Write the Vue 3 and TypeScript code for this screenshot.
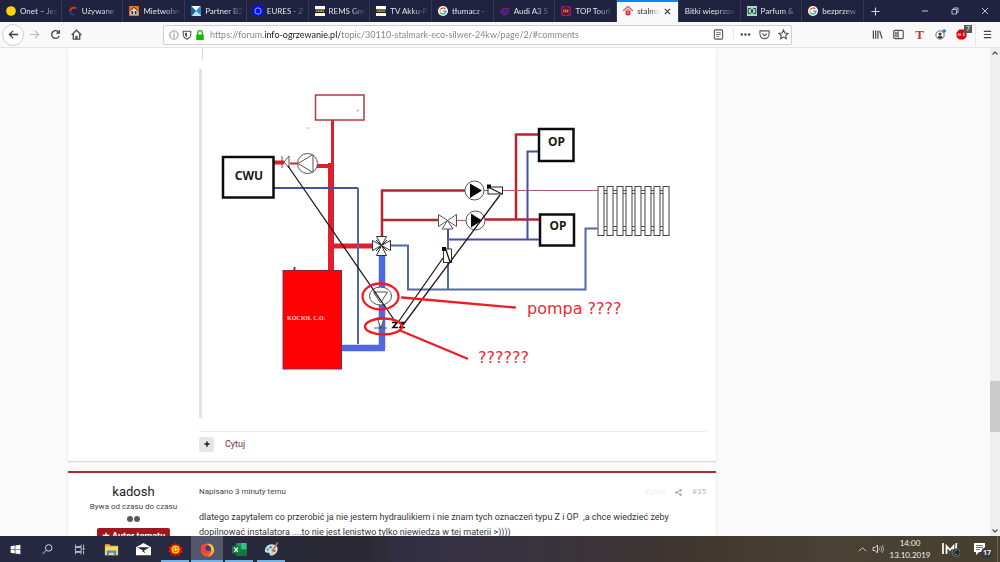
<script setup lang="ts">
import { ref } from 'vue'

interface Tab {
  title: string
  icon: string
  active?: boolean
}

const tabs: Tab[] = [
  { title: 'Onet – Jes', icon: 'onet' },
  { title: 'Używane', icon: 'used' },
  { title: 'Mietwohn', icon: 'house' },
  { title: 'Partner B2', icon: 'partner' },
  { title: 'EURES - Z', icon: 'eures' },
  { title: 'REMS Gm', icon: 'rems' },
  { title: 'TV Akku-P', icon: 'rems' },
  { title: 'tłumacz -', icon: 'google' },
  { title: 'Audi A3 S', icon: 'audi' },
  { title: 'TOP Touri', icon: 'top' },
  { title: 'stalma', icon: 'flame', active: true },
  { title: 'Bitki wieprzov', icon: '' },
  { title: 'Parfum &', icon: 'parfum' },
  { title: 'bezprzew', icon: 'google' },
]

const address = ref('https://forum.info-ogrzewanie.pl/topic/30110-stalmark-eco-silwer-24kw/page/2/#comments')

const apps = [
  { name: 'Start', icon: 'start' },
  { name: 'Szukaj', icon: 'search' },
  { name: 'Widok zadań', icon: 'tasks' },
  { name: 'Eksplorator plików', icon: 'folder' },
  { name: 'Poczta', icon: 'mail' },
  { name: 'Gadu-Gadu', icon: 'sun', running: true },
  { name: 'Firefox', icon: 'firefox', running: true, focused: true },
  { name: 'Excel', icon: 'excel', running: true },
  { name: 'Paint', icon: 'paint', running: true },
]

const fins = Array.from({ length: 8 }, (_, i) => 598 + Math.round(i * 9.3))
</script>

<template>
  <div class="screen">
    <svg class="defs" aria-hidden="true">
      <symbol id="i-onet" viewBox="0 0 12 12"><circle cx="6" cy="6" r="5.8" fill="#ffd500" /></symbol>
      <symbol id="i-used" viewBox="0 0 12 12">
        <path d="M10 2.6C6 1 2.4 3 2.6 6.6" fill="none" stroke="#d8352a" stroke-width="2.4" />
        <path d="M2.6 6.4C2.8 9.4 5 10.8 8 10.6" fill="none" stroke="#22407c" stroke-width="2.4" />
      </symbol>
      <symbol id="i-house" viewBox="0 0 12 12">
        <rect width="12" height="12" rx="1" fill="#e8731f" />
        <path d="M1.5 6L6 2l4.5 4v4.5h-9z" fill="#d9dde2" /><path d="M3 6h2v4H3zM7 6h2v4H7z" fill="#28303c" /><path d="M1 6L6 1.6 11 6" fill="none" stroke="#3a2a20" />
      </symbol>
      <symbol id="i-partner" viewBox="0 0 12 12">
        <rect width="12" height="12" fill="#1e8ed0" /><path d="M0 0h11L6 6z" fill="#fff" /><path d="M0 0l6 6-6 6z" fill="#15659d" /><path d="M6 6l6 5v1H1z" fill="#bfe4f8" />
      </symbol>
      <symbol id="i-eures" viewBox="0 0 12 12">
        <rect width="12" height="12" fill="#0710e8" /><circle cx="6" cy="6" r="3.8" fill="none" stroke="#9cb2ff" stroke-width="1.1" />
      </symbol>
      <symbol id="i-rems" viewBox="0 0 12 12">
        <rect width="12" height="12" fill="#fff" /><path d="M0 4h12v4.5H0z" fill="#25231a" /><path d="M1 6.2h10" stroke="#dfce55" stroke-width="1.4" stroke-dasharray="2 .6" />
      </symbol>
      <symbol id="i-google" viewBox="0 0 12 12">
        <circle cx="6" cy="6" r="6" fill="#fff" />
        <path d="M8.7 3.6A3.7 3.7 0 0 0 2.8 4.2" fill="none" stroke="#ea4335" stroke-width="1.5" />
        <path d="M2.8 4.2a3.7 3.7 0 0 0 0 3.6" fill="none" stroke="#fbbc05" stroke-width="1.5" />
        <path d="M2.8 7.8a3.7 3.7 0 0 0 5.6.9" fill="none" stroke="#34a853" stroke-width="1.5" />
        <path d="M8.4 8.7A3.6 3.6 0 0 0 9.7 6H6.2" fill="none" stroke="#4285f4" stroke-width="1.5" />
      </symbol>
      <symbol id="i-audi" viewBox="0 0 12 12">
        <ellipse cx="5.8" cy="6.4" rx="4.8" ry="3.6" fill="#2229a8" /><path d="M1 8.5C0 4 6 1 11.5 3.5M3 10c4 1 7-1 7.500-4" fill="none" stroke="#b3202e" stroke-width="1.2" />
      </symbol>
      <symbol id="i-top" viewBox="0 0 12 12">
        <rect width="12" height="12" rx="2" fill="#8f1d78" /><circle cx="6" cy="6" r="4.800" fill="#5b102f" /><path d="M2.500 5h7M2.500 7h7" stroke="#ffb52e" stroke-width="1.2" stroke-dasharray="1.800 .5" />
      </symbol>
      <symbol id="i-flame" viewBox="0 0 12 12">
        <path d="M0 6l6-5.500L12 6" fill="none" stroke="#d9646a" stroke-width="1.600" /><path d="M2.500 6.500L6 3.500l3.500 3" fill="none" stroke="#d9646a" stroke-width="1.200" /><circle cx="6" cy="8.500" r="3" fill="#d8303a" /><circle cx="6" cy="8" r="1" fill="#f6b0a8" />
      </symbol>
      <symbol id="i-parfum" viewBox="0 0 12 12">
        <rect width="12" height="12" fill="#a9d8cb" /><path d="M1.500 3h2.500c2 0 2 6 0 6H1.500zM10.500 3H8C6 3 6 9 8 9h2.500z" fill="none" stroke="#244a43" stroke-width="1.200" />
      </symbol>

      <symbol id="i-start" viewBox="0 0 16 16"><path d="M2 4l5-.8v4.400H2zM7.800 3.100L14 2.200v5.400H7.800zM2 8.400h5v4.400L2 12zM7.800 8.400H14v5.400l-6.200-.9z" fill="#fff" /></symbol>
      <symbol id="i-search" viewBox="0 0 16 16"><circle cx="9.500" cy="6" r="4" fill="none" stroke="#d8d8e0" stroke-width="1.200" /><path d="M6.500 9L2 13.500" stroke="#d8d8e0" stroke-width="1.200" /></symbol>
      <symbol id="i-tasks" viewBox="0 0 16 16"><path d="M3 2v2.500h7V2M3 14v-2.500h7V14M3 5.500h7v5H3zM13 2v4M13 9.500V14" fill="none" stroke="#d0d0da" stroke-width="1.100" /><rect x="12" y="6.500" width="2" height="2" fill="#e8e8ee" /></symbol>
      <symbol id="i-folder" viewBox="0 0 16 16"><path d="M1 2.500h5l1 1.500h8v10H1z" fill="#e9b33a" /><path d="M1 5h14v9H1z" fill="#ffd666" /><path d="M3 14V9h10v5h-2.500v-2.500h-5V14z" fill="#3a94da" /></symbol>
      <symbol id="i-mail" viewBox="0 0 16 16"><path d="M0 5.500L8 1l8 4.500V14H0z" fill="#fff" /><path d="M1.500 5.500h13L8 9.500z" fill="#292b42" /><path d="M8 9l2.500 3-4-2z" fill="#292b42" /></symbol>
      <symbol id="i-sun" viewBox="0 0 16 16"><path d="M8 .5l1.600 2.900L12.500 2l.3 3.100 3 .9-1.500 2.500L16 11l-3.200.600-.5 3-2.700-1.200L8 15.500l-1.800-2.300-2.900 1.200-.4-3L0 10.500l1.600-2.300L.4 5.500l3-.6L3.600 2l2.700 1.300z" fill="#f30e08" /><circle cx="8" cy="8" r="4.300" fill="#ffd21c" /><path d="M5.500 8.700c.9 2 4 2 5 0" fill="none" stroke="#8c3c00" /><circle cx="6.500" cy="6.600" r=".7" fill="#4a2500" /><circle cx="9.600" cy="6.600" r=".7" fill="#4a2500" /></symbol>
      <symbol id="i-firefox" viewBox="0 0 16 16"><circle cx="8" cy="8.500" r="7" fill="#ff5a2a" /><path d="M8 1.500c4.500 0 7.500 3.500 7 7.500-.5 3.500-3.500 6.500-7 6.500 4-2 5-5 4-8-.6-2.500-2.500-3.500-4-6z" fill="#ffc629" /><circle cx="7.800" cy="7.500" r="3.800" fill="#29469b" /><path d="M1 6c0-2 1-3.500 1.500-4 .5 1.500 1.500 2.500 4 3L5.500 7c1 2.500 3 3 5.500 2-.5 3-3.500 4.500-6 3.500C2.500 11.500 1 9 1 6z" fill="#f5452c" /></symbol>
      <symbol id="i-excel" viewBox="0 0 16 16"><rect x="4.500" y="1" width="11" height="14" rx="1" fill="#1f9c5c" /><path d="M10 1h5.500v7H10z" fill="#33c481" /><path d="M4.500 8h11v7h-11z" fill="#137644" /><rect y="4" width="9" height="8.500" rx=".8" fill="#107c41" /><path d="M2.500 6l4 4.500M6.500 6l-4 4.500" stroke="#fff" stroke-width="1.300" /></symbol>
      <symbol id="i-paint" viewBox="0 0 16 16"><path d="M8 2.500c5 0 7 3 6.500 6S11 14.500 7.500 14.500c-2 0-1-2.500-2.500-3S1 12 1 9s3-6.500 7-6.500z" fill="#c9e2f0" /><circle cx="4" cy="8" r="1.300" fill="#4caf50" /><circle cx="7" cy="5.500" r="1.300" fill="#3b7fd0" /><circle cx="11" cy="9.500" r="1.400" fill="#e14f45" /><circle cx="8.500" cy="12" r="1.200" fill="#f0bc35" /><path d="M14.500.5L8.500 10" stroke="#bd7a35" stroke-width="1.700" /></symbol>
    </svg>

    <header class="tabbar">
      <div class="tabs" role="tablist">
        <button v-for="(tab, i) in tabs" :key="i" class="tab" :class="{ active: tab.active }" role="tab" :aria-selected="!!tab.active">
          <svg v-if="tab.icon" class="favicon"><use :href="'#i-' + tab.icon" /></svg>
          <span class="tab-title">{{ tab.title }}</span>
          <svg v-if="tab.active" class="tab-close" viewBox="0 0 8 8"><path d="M1 1l6 6M7 1L1 7" stroke="#333" stroke-width="1.200" /></svg>
        </button>
      </div>
      <button class="new-tab" aria-label="Nowa karta"><svg viewBox="0 0 10 10"><path d="M5 .5v9M.5 5h9" stroke="#d8d8e2" stroke-width="1.200" /></svg></button>
      <div class="window-buttons">
        <button aria-label="Minimalizuj"><svg viewBox="0 0 8 8"><path d="M1 4h6" stroke="#c4c4d0" /></svg></button>
        <button aria-label="Przywróć"><svg viewBox="0 0 8 8"><path d="M1 2.500h4.500V7H1zM2.500 2.500V1H7v4.500H5.500" fill="none" stroke="#c4c4d0" stroke-width=".9" /></svg></button>
        <button aria-label="Zamknij"><svg viewBox="0 0 8 8"><path d="M1 1l6 6M7 1L1 7" stroke="#c4c4d0" /></svg></button>
      </div>
    </header>

    <nav class="toolbar">
      <div class="nav-buttons">
        <button class="back" aria-label="Wstecz"><svg viewBox="0 0 12 12"><path d="M11 6H1.500M5.500 2l-4 4 4 4" fill="none" stroke="#3c3c40" stroke-width="1.400" /></svg></button>
        <button aria-label="Dalej"><svg viewBox="0 0 12 12"><path d="M1 6h9.500M6.500 2l4 4-4 4" fill="none" stroke="#b8b8ba" stroke-width="1.300" /></svg></button>
        <button aria-label="Odśwież"><svg viewBox="0 0 12 12"><path d="M10 7.500A4.200 4.200 0 1 1 9 3" fill="none" stroke="#4a4a4e" stroke-width="1.500" /><path d="M11 .5v4.800H6.200z" fill="#4a4a4e" /></svg></button>
        <button aria-label="Strona startowa"><svg viewBox="0 0 12 12"><path d="M.8 6.500L6 1.300l5.200 5.200M2.500 5.500V11h7V5.500" fill="none" stroke="#4a4a4e" stroke-width="1.400" /><path d="M4.800 7.500h2.400V11H4.800z" fill="#4a4a4e" /></svg></button>
      </div>
      <div class="urlbar">
        <svg class="url-icon" viewBox="0 0 12 12"><circle cx="6" cy="6" r="5" fill="none" stroke="#777" /><path d="M6 5v4M6 2.800v1.200" stroke="#777" stroke-width="1.200" /></svg>
        <svg class="url-icon" viewBox="0 0 12 12"><path d="M1.500 1.500h9v4c0 3-2 4.500-4.500 5.500-2.500-1-4.500-2.500-4.500-5.500z" fill="none" stroke="#555" stroke-width="1.300" /><path d="M6 3.300v5.500C4.500 8 3.500 7 3.500 5.500V3.300z" fill="#555" /></svg>
        <svg class="url-icon" viewBox="0 0 12 12"><path d="M1.500 5.500h9V12h-9z" fill="#12bc00" /><path d="M3.300 6V3.500a2.700 2.700 0 0 1 5.400 0V6" fill="none" stroke="#12bc00" stroke-width="1.600" /></svg>
        <input v-model="address" class="address" type="text" aria-label="Adres" spellcheck="false" />
        <button class="reader" aria-label="Widok czytnika"><svg viewBox="0 0 12 12"><rect x="1.500" y="1" width="9" height="10" rx="1.200" fill="none" stroke="#555" stroke-width="1.200" /><path d="M3.500 4h5M3.500 6h5M3.500 8h3" stroke="#555" stroke-width=".9" /></svg></button>
        <button aria-label="Akcje strony"><svg viewBox="0 0 12 12"><circle cx="2" cy="6" r="1.300" fill="#444" /><circle cx="6" cy="6" r="1.300" fill="#444" /><circle cx="10" cy="6" r="1.300" fill="#444" /></svg></button>
        <button aria-label="Pocket"><svg viewBox="0 0 12 12"><path d="M1 2h10v3.500a5 5 0 0 1-10 0z" fill="none" stroke="#555" stroke-width="1.200" /><path d="M3.500 5L6 7.300 8.500 5" fill="none" stroke="#555" stroke-width="1.300" /></svg></button>
        <button aria-label="Zakładka"><svg viewBox="0 0 12 12"><path d="M6 1l1.500 3.300 3.600.4-2.700 2.400.8 3.600L6 8.900l-3.200 1.800.8-3.600L.9 4.700l3.600-.4z" fill="none" stroke="#444" stroke-width="1.100" /></svg></button>
      </div>
      <div class="tools">
        <button aria-label="Biblioteka"><svg viewBox="0 0 12 12"><path d="M1.500 1.500v9M4 1.500v9M6.500 1.500v9M8.300 2l2.700 8.500" stroke="#444" stroke-width="1.300" /></svg></button>
        <button aria-label="Panel boczny"><svg viewBox="0 0 12 12"><rect x=".8" y="1.500" width="10.400" height="9" rx="1.500" fill="none" stroke="#555" stroke-width="1.300" /><path d="M2.500 3.500h2.500v5H2.500zM6 2v8" fill="#999" stroke="#555" stroke-width=".7" /></svg></button>
        <button class="letter" aria-label="Tłumacz">T</button>
        <button aria-label="Konto"><svg viewBox="0 0 12 12"><circle cx="5.500" cy="6.500" r="4.500" fill="#fff" stroke="#555" /><circle cx="5.500" cy="5.500" r="1.800" fill="#444" /><path d="M2.500 9c1-2 5-2 6 0-1.500 2-4.500 2-6 0z" fill="#444" /><circle cx="10" cy="2.200" r="2" fill="#0a84ff" /></svg></button>
        <button class="blocker" aria-label="Adblock"><svg viewBox="0 0 12 12"><path d="M3.500 .5h5L11.500 4v4.500l-3 3h-5l-3-3V4z" fill="#d8000c" /><path d="M2 7.500l1-3 1 3M5.200 4.500v3M7.500 4.500h2M7.500 6h2M7.500 7.500h2" stroke="#fff" stroke-width=".8" fill="none" /></svg><span class="count">7</span></button>
        <button class="menu" aria-label="Menu"><svg viewBox="0 0 12 12"><path d="M2 2.500h8M2 6h8M2 9.500h8" stroke="#444" stroke-width="1.300" /></svg></button>
      </div>
    </nav>

    <div class="viewport">
      <main class="page">
        <article class="post first">
          <div class="author"></div>
          <div class="body">
            <div class="quote-end"></div>
            <blockquote class="quote">
              <svg class="diagram" viewBox="202 69 504 349" role="img" aria-label="Schemat instalacji C.O.">
                <g fill="none" stroke="#df1f2b">
                  <path d="M332.500 120v46" stroke-width="3" />
                  <path d="M331 163v107" stroke-width="6" />
                  <path d="M328 246h46" stroke-width="5" />
                  <path d="M274 162.500h10M315 166h15" stroke-width="4" />
                  <path d="M290 163.500h7" stroke-width="2" />
                </g>
                <rect x="315.500" y="95" width="48.500" height="25" fill="#fff" stroke="#b33a42" stroke-width="1.500" />
                <circle cx="308" cy="128" r=".7" fill="#888" /><circle cx="357.500" cy="110.500" r=".8" fill="#888" />
                <g fill="none" stroke="#b9252f" stroke-width="2.500">
                  <path d="M382 237v-46.500h83M382 220h57M485 219.500h54M516 219.500v-85h23" />
                  <path d="M456 220.500h10M484 190.500h4M503 190.500h95" stroke="#b05a62" stroke-width="1" />
                </g>
                <g fill="none" stroke="#4650a0" stroke-width="2">
                  <path d="M274 188h84M448 228v11.500h92M527.500 239V151.500h12" />
                  <path d="M358 188v156M391 245.500h17v44h177.500v-61h12M448 239v50" stroke="#5268a8" />
                </g>
                <path d="M382 254v94M341 348h44" fill="none" stroke="#5069e3" stroke-width="6.500" />
                <rect x="283" y="270.500" width="58.500" height="98.500" fill="#fd0203" stroke="#8b2540" />
                <path d="M294.500 267v4" stroke="#b11c2c" stroke-width="2" />
                <text x="287" y="319.500" class="boiler">KOCIOŁ C.O.</text>

                <g fill="#fff" stroke="#0c0c0c" stroke-width="2.500">
                  <rect x="223" y="157" width="50.500" height="40.500" />
                  <rect x="539" y="129" width="34.500" height="32" />
                  <rect x="540" y="214.500" width="34" height="31" />
                </g>
                <text x="249" y="180" class="label">CWU</text>
                <text x="556.500" y="146" class="label">OP</text>
                <text x="558" y="230" class="label">OP</text>

                <g fill="#fff" stroke="#555">
                  <circle cx="307.500" cy="163.500" r="10" />
                  <path d="M298 163.500l15-9v18z" />
                  <path d="M282 156v12" stroke="#a33" /><path d="M289 156v12l-5-6z" />
                  <circle cx="474.500" cy="190.500" r="9.500" /><circle cx="475.500" cy="220.500" r="9.500" />
                  <path d="M447.500 220.500l-9-6v12zM447.500 220.500l9-6v12zM447.500 220.500l-5.500 8.500h11z" />
                  <path d="M381.500 245.500l-5-9h10zM381.500 245.500l-5 10h10zM381.500 245.500l-9-5v10zM381.500 245.500l9-5v10z" stroke="#333" />
                  <path d="M376 240l11 11M387 240l-11 11" stroke="#222" />
                  <ellipse cx="380.500" cy="296" rx="11" ry="9" /><path d="M373.500 292h14l-7 11z" />
                  <path d="M377 318l4 10 3-10zM374 328h13" />
                  <rect x="488" y="187" width="14.500" height="7" stroke="#222" /><rect x="443.500" y="249" width="8" height="13.500" stroke="#333" />
                </g>
                <g fill="#080808">
                  <path d="M470 183.500l12 7-12 7.500zM471 213.500l11 7-11 7z" />
                  <rect x="487" y="184.500" width="4" height="4" /><rect x="442" y="247" width="4" height="4" />
                </g>
                <path d="M392 322.500h5l-4 5h5M399 322.500h5l-4 5h5" fill="none" stroke="#111" stroke-width="1.700" />
                <path d="M288 166l109 158M500 195l-97 130M443 258l-44 63M490 188l12 6M446 250l4 12" fill="none" stroke="#1c1c1c" stroke-width="1.300" />

                <g fill="#fff" stroke="#555">
                  <path v-for="x in fins.slice(0, 7)" :key="'c' + x" :d="`M${x + 6} 190.500h4M${x + 6} 193.500h4M${x + 6} 226.500h4M${x + 6} 230.500h4`" />
                  <rect v-for="x in fins" :key="x" :x="x" y="186.500" width="6" height="49" stroke="#444" />
                </g>

                <g fill="none" stroke="#ee1c24" stroke-width="2.300" stroke-linecap="round">
                  <ellipse cx="380.500" cy="296.500" rx="18" ry="13" /><ellipse cx="383.500" cy="326.500" rx="18.500" ry="8" />
                  <path d="M402 297.500l113 10M400 330.500l67 28" />
                </g>
                <text x="527" y="314" class="note">pompa ????</text>
                <text x="478" y="363" class="note">??????</text>
              </svg>
            </blockquote>
            <footer class="post-footer">
              <button class="multi" aria-label="Cytuj wiele"><svg viewBox="0 0 8 8"><path d="M4 .5v7M.5 4h7" stroke="#222" stroke-width="2" /></svg></button>
              <a href="#cytuj">Cytuj</a>
            </footer>
          </div>
        </article>

        <article class="post second">
          <aside class="author">
            <a class="name" href="#kadosh">kadosh</a>
            <span class="rank">Bywa od czasu do czasu</span>
            <span class="pips"><i></i><i></i></span>
            <strong class="badge">★ Autor tematu</strong>
          </aside>
          <div class="body">
            <div class="meta">
              <a href="#czas">Napisano 3 minuty temu</a>
              <span class="meta-right">
                <a class="report" href="#zglos">Zgłoś</a>
                <a href="#udostepnij" aria-label="Udostępnij"><svg viewBox="0 0 8 8"><path d="M6.500 1.500L1.700 4l4.800 2.500" fill="none" stroke="#aaa" /><circle cx="6.400" cy="1.500" r="1.400" fill="#aaa" /><circle cx="1.600" cy="4" r="1.500" fill="#aaa" /><circle cx="6.400" cy="6.500" r="1.400" fill="#aaa" /></svg></a>
                <a class="number" href="#35">#35</a>
              </span>
            </div>
            <p class="text">dlatego zapytałem co przerobić ja nie jestem hydraulikiem i nie znam tych oznaczeń typu Z i OP &nbsp;,a chce wiedzieć żeby dopilnować instalatora ....to nie jest lenistwo tylko niewiedza w tej materii &gt;))))</p>
          </div>
        </article>
      </main>
      <div class="scrollbar" aria-hidden="true">
        <svg viewBox="0 0 10 10"><path d="M2.500 6.500L5 4l2.500 2.500" fill="none" stroke="#555" stroke-width="1.300" /></svg>
        <div class="track"><div class="thumb"></div></div>
        <svg viewBox="0 0 10 10"><path d="M2.500 3.500L5 6l2.500-2.500" fill="none" stroke="#555" stroke-width="1.300" /></svg>
      </div>
    </div>

    <footer class="taskbar">
      <div class="apps">
        <button v-for="app in apps" :key="app.name" class="app" :class="{ running: app.running, focused: app.focused }" :aria-label="app.name">
          <svg :class="{ thin: ['start', 'search', 'tasks'].includes(app.icon) }"><use :href="'#i-' + app.icon" /></svg>
        </button>
      </div>
      <div class="tray">
        <button aria-label="Ukryte ikony"><svg class="sm" viewBox="0 0 10 10"><path d="M1 7l4-4 4 4" fill="none" stroke="#ddd" /></svg></button>
        <button aria-label="Głośność"><svg class="vol" viewBox="0 0 12 10"><path d="M1 3.500h2L5.500 1v8L3 6.500H1z" fill="none" stroke="#ddd" stroke-width=".9" /><path d="M7 3.500q1 1.500 0 3M8.800 2.300q2 2.700 0 5.400M10.300 1q2.500 4 0 8" fill="none" stroke="#bbb" stroke-width=".8" /></svg></button>
        <time class="clock"><span>14:00</span><span>13.10.2019</span></time>
        <button class="badged" aria-label="Malwarebytes"><svg viewBox="0 0 20 16"><path d="M3 2v11M6.500 13V5l3.500 4 3.500-4v8M16.500 2l-1 10" fill="none" stroke="#fff" stroke-width="1.700" /><circle cx="16" cy="11.500" r="4" fill="#242424" stroke="#888" stroke-width=".7" /><path d="M17 9.500a2.200 2.200 0 1 0 0 4" fill="none" stroke="#799" stroke-width=".9" /></svg></button>
        <button class="badged" aria-label="Powiadomienia"><svg viewBox="0 0 20 16"><path d="M3 2h11v9H8l-3 3v-3H3z" fill="#fff" /><path d="M5 4.500h7M5 6.500h7M5 8.500h4" stroke="#554f45" stroke-width=".8" /></svg><span class="num">17</span></button>
      </div>
    </footer>
  </div>
</template>

<style>
html,
body {
  margin: 0;
  overflow: hidden;
}
</style>

<style scoped>
.screen {
  display: flex;
  flex-direction: column;
  height: 100vh;
  font-family: Roboto, "Liberation Sans", sans-serif;
  background: #fafafa;
}
.defs {
  display: none;
}
button {
  border: 0;
  padding: 0;
  margin: 0;
  background: none;
  font: inherit;
  color: inherit;
  display: flex;
  align-items: center;
  justify-content: center;
}
a {
  color: inherit;
  text-decoration: none;
}
svg {
  display: block;
  flex: none;
}

.tabbar {
  flex: none;
  display: flex;
  height: 22px;
  background: #202340;
  color: #e2e2ec;
  font: 8px Lato, "Open Sans", sans-serif;
}
.tabs {
  display: grid;
  grid-template-columns: repeat(14, 1fr);
  width: 86.4%;
}
.tab {
  justify-content: flex-start;
  gap: 4px;
  padding: 0 2px 0 6px;
  min-width: 0;
  box-sizing: border-box;
  border-right: 1px solid #35385a;
}
.favicon {
  width: 10px;
  height: 10px;
}
.tab-title {
  flex: 1;
  min-width: 0;
  overflow: hidden;
  white-space: nowrap;
  text-align: left;
  mask-image: linear-gradient(90deg, #000 55%, transparent);
}
.tab.active {
  background: #f9f9fa;
  color: #333;
  box-shadow: inset 0 2px #0a84ff;
  padding-right: 7px;
}
.tab-close {
  width: 7px;
  height: 7px;
}
.new-tab {
  width: 22px;
}
.new-tab svg {
  width: 9px;
  height: 9px;
}
.window-buttons {
  flex: 1;
  display: flex;
  justify-content: flex-end;
}
.window-buttons button {
  width: 30px;
}
.window-buttons svg {
  width: 8px;
  height: 8px;
}

.toolbar {
  flex: none;
  display: flex;
  align-items: center;
  height: 26px;
  box-sizing: border-box;
  border-bottom: 1px solid #e4e4e6;
  background: #f9f9fa;
}
.nav-buttons {
  display: flex;
  align-items: center;
  width: 163px;
  box-sizing: border-box;
  padding-left: 2px;
}
.nav-buttons button {
  width: 21px;
}
.nav-buttons button svg {
  width: 11px;
  height: 11px;
}
.nav-buttons .back {
  height: 22px;
  width: 22px;
  box-sizing: border-box;
  border: 1px solid #cfcfd2;
  border-radius: 50%;
  background: #fff;
}
.urlbar {
  flex: 1;
  display: flex;
  align-items: center;
  height: 20px;
  box-sizing: border-box;
  border: 1px solid #d0d0d3;
  border-radius: 2px;
  background: #fff;
  padding: 0 0 0 5px;
  gap: 3px;
}
.url-icon {
  width: 10px;
  height: 10px;
}
.urlbar button {
  width: 16px;
}
.urlbar button svg {
  width: 11px;
  height: 11px;
}
.urlbar .reader {
  width: 22px;
  border-right: 1px solid #e4e4e4;
  padding-right: 8px;
}
.address {
  flex: 1;
  min-width: 0;
  border: 0;
  outline: 0;
  padding: 0;
  margin-left: 2px;
  height: 16px;
  font: 9px Lato, "Open Sans", sans-serif;
  color: transparent;
  background: linear-gradient(90deg, #808084 0 55px, #151518 55px 130px, #808084 130px);
  background-clip: text;
}
.tools {
  display: flex;
  align-items: center;
  justify-content: flex-end;
  width: 208px;
  padding-right: 1px;
  box-sizing: border-box;
}
.tools button {
  width: 21px;
}
.tools svg {
  width: 11px;
  height: 11px;
}
.tools .letter {
  font: bold 13px/14px "Liberation Serif", serif;
  color: #c8372d;
}
.tools .blocker {
  position: relative;
}
.count {
  position: absolute;
  right: 0;
  top: -4px;
  padding: 0 2px;
  font: 7px/8px "Open Sans", sans-serif;
  color: #fff;
  background: #57575c;
}
.tools .menu {
  width: 24px;
  margin-left: 3px;
  border-left: 1px solid #e6e6e8;
  height: 22px;
}

.viewport {
  flex: 1;
  min-height: 0;
  display: flex;
  overflow: hidden;
}
.page {
  flex: 1;
  display: flex;
  flex-direction: column;
  gap: 10px;
  padding-right: 274px;
  padding-left: 68px;
  min-width: 0;
}
.post {
  display: flex;
  background: #fff;
  box-shadow: 0 1px 1px #d9d9d9, 0 0 1px #ccc;
}
.author {
  flex: none;
  width: 131px;
}
.body {
  flex: 1;
  min-width: 0;
  padding-right: 10px;
}
.quote-end {
  height: 12px;
  margin: 0 0 9px 3px;
  border-left: 1px solid #d4d4d4;
}
.quote {
  margin: 0 0 13px;
  border-left: 3px solid #e3e3e3;
}
.diagram {
  width: 100%;
  height: auto;
}
.label {
  font: bold 12px "Noto Sans", "Open Sans", sans-serif;
  text-anchor: middle;
  fill: #1c1c1c;
}
.boiler {
  font: bold 6px "Liberation Serif", serif;
  fill: #ffd9d9;
}
.note {
  font: 16px "DejaVu Sans", sans-serif;
  fill: #ee2a32;
}
.post-footer {
  display: flex;
  align-items: center;
  gap: 11px;
  height: 30px;
  padding-bottom: 5px;
  box-sizing: border-box;
  border-top: 1px solid #ebebeb;
  font-size: 9px;
  color: #6b2f33;
}
.multi {
  width: 15px;
  height: 15px;
  border-radius: 2px;
  background: #e6e6e6;
}
.multi svg {
  width: 6px;
  height: 6px;
}
.second {
  flex: 1;
  border-top: 2px solid #b02a30;
}
.second .author {
  display: flex;
  flex-direction: column;
  align-items: center;
  padding-top: 10px;
  color: #444;
}
.name {
  font-size: 13px;
  line-height: 18px;
  color: #222;
}
.rank {
  font-size: 8px;
  line-height: 12px;
}
.pips {
  display: flex;
  gap: 1px;
  padding: 3px 0 6px;
}
.pips i {
  width: 6px;
  height: 6px;
  border-radius: 50%;
  background: #5a5a5a;
}
.badge {
  flex: none;
  width: 73px;
  text-align: center;
  border-radius: 2px;
  background: #a0181e;
  color: #fff;
  font-size: 9px;
  line-height: 16px;
}
.meta {
  display: flex;
  justify-content: space-between;
  align-items: center;
  margin-top: 13px;
  font-size: 8px;
  line-height: 12px;
  color: #444;
}
.meta-right {
  display: flex;
  align-items: center;
  gap: 10px;
  color: #bbb;
}
.meta-right svg {
  width: 7px;
  height: 7px;
}
.report {
  color: #eee;
}
.text {
  margin: 12px 0 0;
  font-size: 9px;
  line-height: 15px;
  color: #353535;
}

.scrollbar {
  flex: none;
  width: 10px;
  display: flex;
  flex-direction: column;
  background: #efefef;
}
.scrollbar svg {
  width: 10px;
  height: 10px;
}
.track {
  flex: 1;
  display: flex;
  flex-direction: column;
  justify-content: flex-end;
  padding-bottom: 94px;
}
.thumb {
  height: 51px;
  background: #cbcbcb;
}

.taskbar {
  flex: none;
  display: flex;
  justify-content: space-between;
  height: 26px;
  color: #f0f0f0;
  background: linear-gradient(90deg, #272943 0, #282a40 22%, #292833 32%, #2c2a34 37%, #322f45 41%, #37323f 50%, #3a3436 62%, #43382f 72%, #494133 82%, #47402f 100%);
}
.apps {
  display: flex;
}
.app {
  position: relative;
  width: 32px;
}
.app:first-child {
  width: 31px;
}
.app svg {
  width: 15px;
  height: 15px;
}
.app svg.thin {
  width: 13px;
  height: 13px;
}
.app.focused {
  background: #54566b;
}
.app.running::after {
  content: "";
  position: absolute;
  inset: auto 2px 0;
  height: 2px;
  background: #6fb2e6;
}
.app.focused::after {
  inset: auto 0 0;
}
.tray {
  display: flex;
  align-items: center;
  padding-right: 1px;
  border-right: 1px solid #6a6355;
  margin-right: 2px;
}
.sm {
  width: 9px;
  height: 9px;
}
.vol {
  width: 12px;
  height: 10px;
  margin-left: 5px;
}
.clock {
  display: flex;
  flex-direction: column;
  align-items: center;
  width: 44px;
  margin: 0 0 0 4px;
  font: 8px/12px Lato, "Open Sans", sans-serif;
}
.badged {
  position: relative;
  width: 31px;
}
.clock + .badged {
  margin-left: 2px;
}
.badged svg {
  width: 20px;
  height: 16px;
}
.num {
  position: absolute;
  right: 3px;
  bottom: -2px;
  width: 12px;
  height: 12px;
  border-radius: 50%;
  background: #3a3a3a;
  font: bold 7px/12px "Open Sans", sans-serif;
  text-align: center;
}
</style>
